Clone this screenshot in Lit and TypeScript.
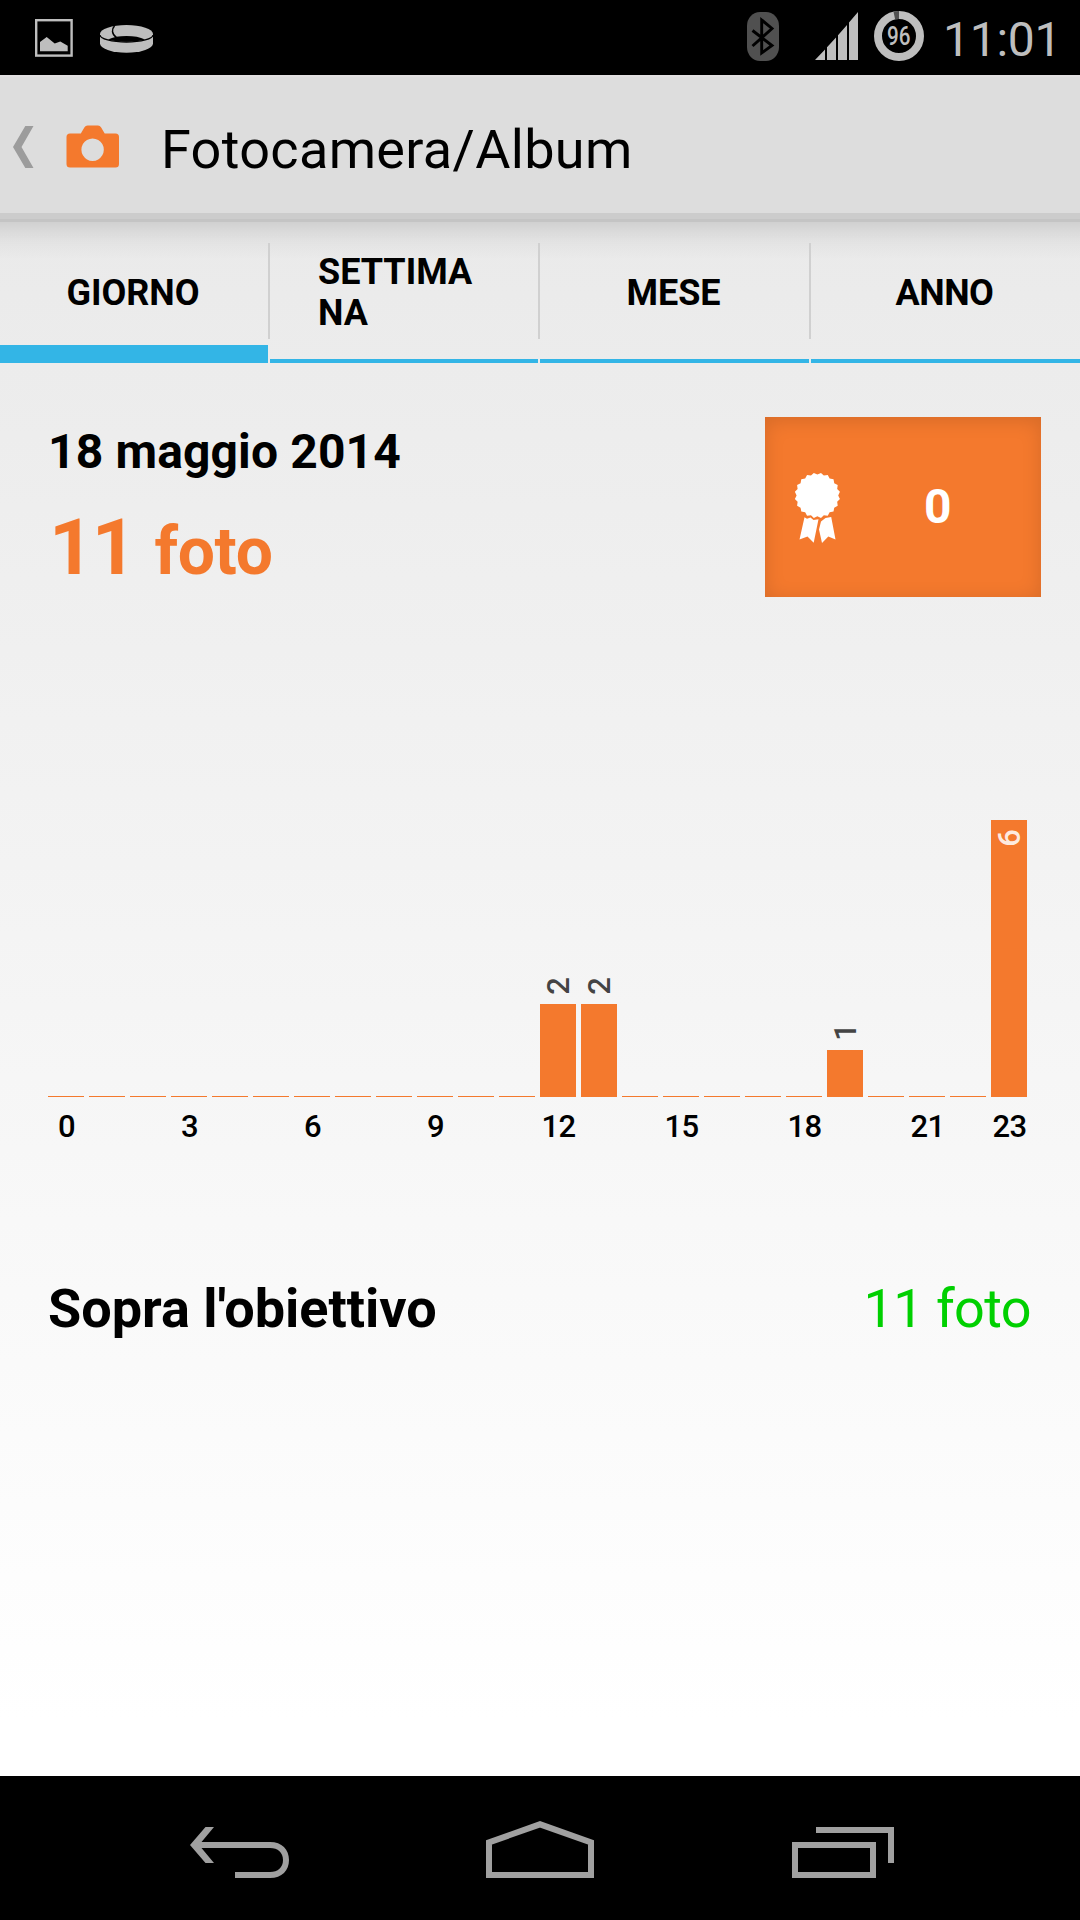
import { LitElement, html, svg, css, nothing } from "lit";
import { customElement, property } from "lit/decorators.js";
import { classMap } from "lit/directives/class-map.js";
import { styleMap } from "lit/directives/style-map.js";

@customElement("status-bar")
class StatusBar extends LitElement {
  static styles = css`
    :host {
      display: flex;
      box-sizing: border-box;
      height: 75px;
      padding: 0 20px 0 34px;
      background: #000;
      color: #bebebe;
    }
    svg {
      display: block;
      flex: none;
    }
    .ring {
      margin-left: 25px;
    }
    .bluetooth {
      margin-left: auto;
    }
    .signal {
      margin-left: 34px;
    }
    .battery {
      margin-left: 15px;
    }
    .level {
      font-size: 25px;
      font-weight: 500;
      font-family: Roboto, sans-serif;
    }
    .clock {
      width: 117px;
      margin-left: 18px;
      padding-top: 11px;
      font-size: 48px;
      line-height: 57px;
      letter-spacing: -0.25px;
      white-space: nowrap;
    }
  `;

  render() {
    return html`
      <svg width="40" height="75" viewBox="34 0 40 75">
        <rect x="36.2" y="20.2" width="35.4" height="35.4" fill="none" stroke="#bebebe" stroke-width="2.4" />
        <path d="M40 42 46.700 37l8 6.600 5.600-2.200 7.400 4.300v5.500H40z" fill="#bebebe" />
      </svg>
      <svg class="ring" width="56" height="75" viewBox="99 0 56 75">
        <path d="M100 34A26.500 9 0 0 1 153 34V43.500A26.500 9.300 0 0 1 100 43.500z" fill="#bebebe" />
        <path d="M100 35A26.500 7 0 0 0 153 35" fill="none" stroke="#000" stroke-width="1.300" />
        <path d="M108 39.500C113 37 119 36 126.500 36S140 37 145 39.500C140 41.200 134 41.700 126.500 41.700S113 41.200 108 39.500z" fill="#000" />
        <path d="M114.500 26C111.500 29 111.500 34 116.500 37.500" fill="none" stroke="#000" stroke-width="1.500" />
      </svg>
      <svg class="bluetooth" width="34" height="75" viewBox="746 0 34 75">
        <rect x="747" y="12" width="32" height="49" rx="13" ry="14" fill="#505050" />
        <path d="M752.500 30.500 772 45.500 761.700 53V20L772 28.500 752.500 46" fill="none" stroke="#000" stroke-width="2.900" />
      </svg>
      <svg class="signal" width="45" height="75" viewBox="814 0 45 75">
        <path
          d="M815 60 825 49.500V60zM827 60V47.200L836 37.500V60zM838 60V35.200L847 25V60zM849 60V22.500L858 12V60z"
          fill="#bebebe"
        />
      </svg>
      <svg class="battery" width="51" height="75" viewBox="874 0 51 75">
        <circle cx="899" cy="36" r="21" fill="none" stroke="#bebebe" stroke-width="8" />
        <path d="M899 15A21 21 0 0 0 894.300 15.500" fill="none" stroke="#505050" stroke-width="8" />
        <text class="level" x="887" y="45.300" textLength="23.500" lengthAdjust="spacingAndGlyphs" fill="#bebebe">96</text>
      </svg>
      <div class="clock">11:01</div>
    `;
  }
}

@customElement("action-bar")
class ActionBar extends LitElement {
  static styles = css`
    :host {
      display: flex;
      align-items: flex-start;
      box-sizing: border-box;
      height: 147px;
      background: #ddd;
      border-bottom: 3px solid #c4c4c4;
      box-shadow: inset 0 -6px #ccc, inset 0 2px #e2e0e1;
    }
    svg {
      display: block;
      flex: none;
    }
    .up {
      margin: 51px 0 0 13px;
    }
    .camera {
      margin: 50px 0 0 32px;
    }
    .title {
      margin: 43px 0 0 41px;
      font-size: 54px;
      line-height: 63px;
      letter-spacing: 0.33px;
      white-space: nowrap;
    }
  `;
  @property() heading = "";

  render() {
    return html`
      <svg class="up" width="21" height="42" viewBox="0 0 21 42">
        <path d="M12.300 0H20.500L8.500 21 20.500 42H12.300L0 21z" fill="#9c9c9c" />
      </svg>
      <svg class="camera" width="54" height="43" viewBox="66 125 54 43">
        <path
          fill-rule="evenodd"
          fill="#f4792d"
          d="M70 133.500H80.800L84.500 127.300Q85.500 125.500 87.500 125.500H98Q100 125.500 101 127.300L104.700 133.500H115.500Q119 133.500 119 137V164Q119 167.500 115.500 167.500H70Q66.500 167.500 66.500 164V137Q66.500 133.500 70 133.500zM92.600 138.500a11.200 11.200 0 1 0 0.010 0z"
        />
      </svg>
      <div class="title">${this.heading}</div>
    `;
  }
}

@customElement("period-tabs")
class PeriodTabs extends LitElement {
  static styles = css`
    :host {
      display: grid;
      grid-template-columns: 268px 268px 269px 269px;
      column-gap: 2px;
      height: 141px;
      background: linear-gradient(
        rgba(0, 0, 0, 0.11),
        rgba(0, 0, 0, 0.065) 10px,
        rgba(0, 0, 0, 0.033) 20px,
        rgba(0, 0, 0, 0) 37px
      );
    }
    .tab {
      position: relative;
      display: flex;
      align-items: center;
      justify-content: center;
      box-sizing: border-box;
      padding: 1px 49px 0 47px;
      box-shadow: inset 0 -4px #33b5e6;
      font-size: 36px;
      font-weight: 700;
      line-height: 41px;
    }
    .selected {
      box-shadow: inset 0 -18px #33b5e6;
    }
    .wrapped {
      justify-content: flex-start;
      padding: 0 0 0 48px;
    }
    .tab + .tab::before {
      content: "";
      position: absolute;
      left: -2px;
      top: 21px;
      width: 2px;
      height: 96px;
      background: #d0d0d0;
    }
    .tight {
      letter-spacing: -0.5px;
    }
  `;
  @property({ attribute: false }) tabs: string[][] = [];

  render() {
    return this.tabs.map(
      (lines, i) => html`
        <div
          class=${classMap({ tab: true, selected: i === 0, wrapped: lines.length > 1, tight: lines[0] === "ANNO" })}
        >
          <span>${lines.map((line, n) => html`${n ? html`<br />` : nothing}${line}`)}</span>
        </div>
      `
    );
  }
}

@customElement("goal-badge")
class GoalBadge extends LitElement {
  static styles = css`
    :host {
      display: flex;
      align-items: center;
      box-sizing: border-box;
      width: 276px;
      height: 180px;
      padding-left: 29px;
      background: #f4792d;
      box-shadow: inset 0 3px 20px rgba(0, 0, 0, 0.13);
      color: #fff;
    }
    .count {
      margin-left: 82px;
      padding-bottom: 2px;
      font-size: 48px;
      font-weight: 700;
      line-height: 57px;
    }
  `;
  @property({ type: Number }) count = 0;

  private rosette() {
    return Array.from({ length: 40 }, (_, i) => {
      const r = i % 2 ? 20.8 : 22.8;
      const a = ((i * 9 + 9) * Math.PI) / 180;
      return `${(77.4 + r * Math.sin(a)).toFixed(2)},${(95.4 - r * Math.cos(a)).toFixed(2)}`;
    }).join(" ");
  }

  render() {
    return html`
      <svg width="48" height="74" viewBox="54 70 48 74" fill="#fff">
        ${svg`<polygon points=${this.rosette()} />`}
        <path d="M64.500 117.300 67 118.800 70.500 117.500 73.500 120 78.500 119.300 73.700 142.800 67.500 136.500 59.500 139.500z" />
        <path d="M81 121.500 85.500 118 91.200 117 95.500 139.500 88.300 136.500 82 143 79 129.500z" />
      </svg>
      <span class="count">${this.count}</span>
    `;
  }
}

@customElement("hour-chart")
class HourChart extends LitElement {
  static styles = css`
    :host {
      display: grid;
      grid-template-columns: repeat(24, 36px);
      column-gap: 5px;
    }
    .hour {
      display: flex;
      flex-direction: column;
      justify-content: flex-end;
      height: 335px;
    }
    .plot {
      display: flex;
      flex-direction: column;
      justify-content: flex-end;
      height: 277px;
    }
    .bar {
      flex: none;
      box-sizing: border-box;
      background: #f4792d;
    }
    .value {
      flex: none;
      box-sizing: border-box;
      width: 37px;
      margin-bottom: 9px;
      writing-mode: vertical-rl;
      text-orientation: sideways;
      transform: rotate(180deg);
      font-size: 31px;
      font-weight: 500;
      line-height: 37px;
      color: #444;
    }
    .inside {
      padding-bottom: 9px;
      color: rgba(255, 255, 255, 0.87);
    }
    .label {
      display: flex;
      justify-content: center;
      height: 35px;
      margin-top: 12px;
      padding-left: 1px;
      font-size: 31px;
      font-weight: 500;
      line-height: 35px;
      letter-spacing: -0.5px;
      white-space: nowrap;
    }
  `;
  @property({ attribute: false }) values: number[] = [];

  private barHeight(v: number) {
    return v ? Math.round(v * 46.1 + 0.6) : 1;
  }

  render() {
    const max = Math.max(...this.values);
    return this.values.map((v, h) => {
      const inside = v === max;
      const value = v ? html`<div class=${classMap({ value: true, inside })}>${v}</div>` : nothing;
      return html`
        <div class="hour">
          <div class="plot">
            ${inside ? nothing : value}
            <div class="bar" style=${styleMap({ height: `${this.barHeight(v)}px` })}>${inside ? value : nothing}</div>
          </div>
          <div class="label">${h % 3 === 0 || h === 23 ? h : nothing}</div>
        </div>
      `;
    });
  }
}

@customElement("navigation-bar")
class NavigationBar extends LitElement {
  static styles = css`
    :host {
      display: flex;
      align-items: flex-start;
      box-sizing: border-box;
      height: 144px;
      padding: 44px 186px 0 190px;
      gap: 196px;
      background: #000;
    }
    svg {
      flex: none;
    }
    .recent {
      margin-left: 2px;
    }
  `;

  render() {
    return html`
      <svg width="100" height="60" viewBox="190 1820 100 60">
        <path d="M205.500 1827H214L201.500 1842H270C282 1842 289 1849.500 289 1860S282 1878 270 1878H235V1872H270C278 1872 283 1867.500 283 1860S278 1848 270 1848H201.500L214 1863H205.500L190 1845z" fill="#a0a0a0" />
      </svg>
      <svg width="108" height="60" viewBox="486 1820 108 60">
        <path d="M489 1875V1842.400L540 1824.300 591 1842.400V1875z" fill="none" stroke="#a0a0a0" stroke-width="6" />
      </svg>
      <svg class="recent" width="102" height="60" viewBox="792 1820 102 60">
        <path d="M795 1845H873V1875H795zM816 1830H891V1863" fill="none" stroke="#a0a0a0" stroke-width="6" />
      </svg>
    `;
  }
}

@customElement("app-root")
class AppRoot extends LitElement {
  static styles = css`
    :host {
      display: flex;
      flex-direction: column;
      width: 1080px;
      height: 1920px;
      overflow: hidden;
      font-family: Roboto, sans-serif;
      color: #000;
      background: linear-gradient(#eaeaea 222px, #fff 1720px);
    }
    .content {
      flex: 1;
      display: flex;
      flex-direction: column;
      padding: 54px 39px 0 48px;
    }
    .summary {
      display: flex;
      justify-content: space-between;
      align-items: flex-start;
      height: 180px;
    }
    .date {
      margin: 6px 0 0;
      font-size: 48px;
      font-weight: 700;
      line-height: 57px;
      letter-spacing: 0.14px;
    }
    .total {
      display: flex;
      align-items: baseline;
      margin: 22px 0 0 1px;
      line-height: 91px;
      font-weight: 700;
      color: #f4792d;
    }
    .number {
      font-size: 78px;
      letter-spacing: -2px;
    }
    .unit {
      margin-left: 20px;
      font-size: 66px;
      letter-spacing: -0.4px;
    }
    hour-chart {
      margin-top: 212px;
    }
    .goal {
      display: flex;
      justify-content: space-between;
      margin: 133px 10px 0 0;
      font-size: 54px;
      line-height: 63px;
    }
    .goal-name {
      font-weight: 700;
    }
    .goal-value {
      letter-spacing: -0.6px;
      color: #00d000;
    }
  `;

  private tabs = [["GIORNO"], ["SETTIMA", "NA"], ["MESE"], ["ANNO"]];
  private values = [0, 0, 0, 0, 0, 0, 0, 0, 0, 0, 0, 0, 2, 2, 0, 0, 0, 0, 0, 1, 0, 0, 0, 6];

  render() {
    return html`
      <status-bar></status-bar>
      <action-bar heading="Fotocamera/Album"></action-bar>
      <period-tabs .tabs=${this.tabs}></period-tabs>
      <main class="content">
        <section class="summary">
          <div>
            <div class="date">18 maggio 2014</div>
            <div class="total"><span class="number">11</span><span class="unit">foto</span></div>
          </div>
          <goal-badge .count=${0}></goal-badge>
        </section>
        <hour-chart .values=${this.values}></hour-chart>
        <section class="goal">
          <span class="goal-name">Sopra l'obiettivo</span>
          <span class="goal-value">11 foto</span>
        </section>
      </main>
      <navigation-bar></navigation-bar>
    `;
  }
}
